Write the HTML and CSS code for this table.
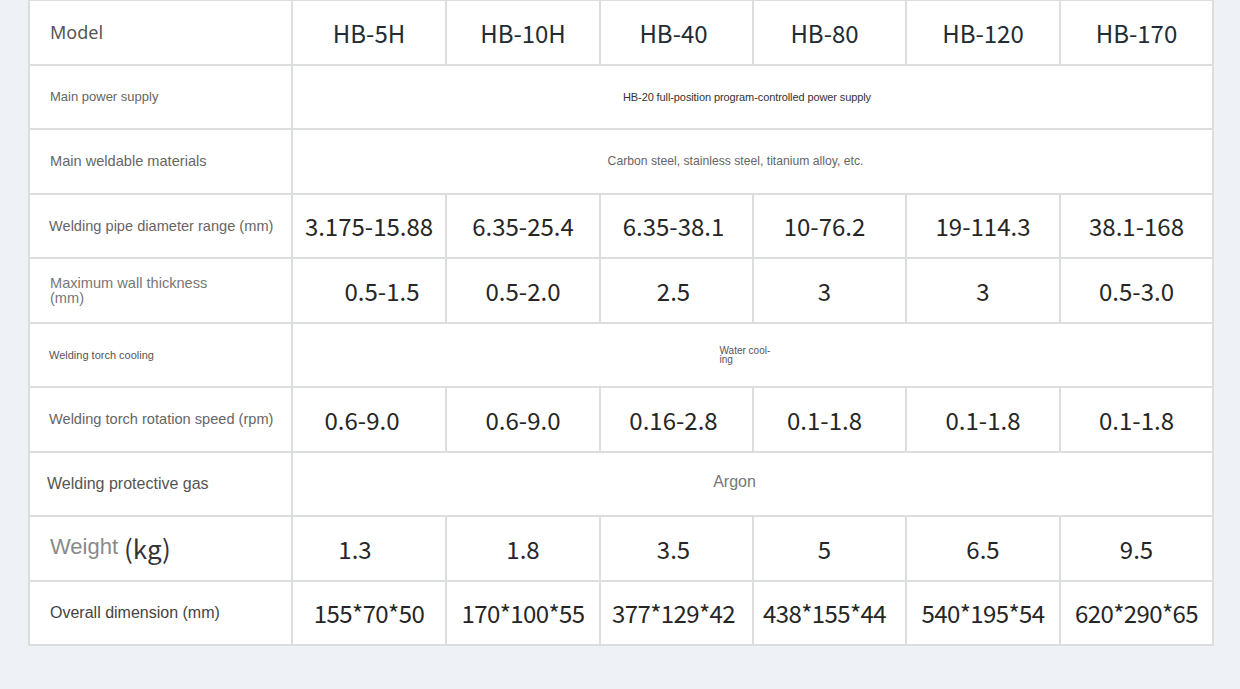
FILE: index.html
```html
<!DOCTYPE html>
<html lang="en">
<head>
<meta charset="utf-8">
<title>Specifications</title>
<link rel="stylesheet" href="styles.css">
</head>
<body>
<div class="page">
  <div class="spec">
    <div class="cell label model">Model</div>
    <div class="cell head">HB-5H</div>
    <div class="cell head">HB-10H</div>
    <div class="cell head nudge-s">HB-40</div>
    <div class="cell head nudge-m">HB-80</div>
    <div class="cell head">HB-120</div>
    <div class="cell head">HB-170</div>

    <div class="cell label tiny">Main power supply</div>
    <div class="cell span note-dark">HB-20 full-position program-controlled power supply</div>

    <div class="cell label small">Main weldable materials</div>
    <div class="cell span note-gray">Carbon steel, stainless steel, titanium alloy, etc.</div>

    <div class="cell label mid">Welding pipe diameter range (mm)</div>
    <div class="cell val">3.175-15.88</div>
    <div class="cell val">6.35-25.4</div>
    <div class="cell val nudge-s">6.35-38.1</div>
    <div class="cell val nudge-m">10-76.2</div>
    <div class="cell val">19-114.3</div>
    <div class="cell val">38.1-168</div>

    <div class="cell label wrap">Maximum wall thickness<br>(mm)</div>
    <div class="cell val shift-r">0.5-1.5</div>
    <div class="cell val">0.5-2.0</div>
    <div class="cell val nudge-s">2.5</div>
    <div class="cell val nudge-m">3</div>
    <div class="cell val">3</div>
    <div class="cell val">0.5-3.0</div>

    <div class="cell label micro">Welding torch cooling</div>
    <div class="cell span"><span class="water">Water cool-<br>ing</span></div>

    <div class="cell label mid">Welding torch rotation speed (rpm)</div>
    <div class="cell val shift-s">0.6-9.0</div>
    <div class="cell val">0.6-9.0</div>
    <div class="cell val nudge-s">0.16-2.8</div>
    <div class="cell val nudge-m">0.1-1.8</div>
    <div class="cell val">0.1-1.8</div>
    <div class="cell val">0.1-1.8</div>

    <div class="cell label big gas">Welding protective gas</div>
    <div class="cell span argon">Argon</div>

    <div class="cell label weight"><span class="w-word">Weight</span><span class="w-unit">(kg)</span></div>
    <div class="cell val shift-l">1.3</div>
    <div class="cell val">1.8</div>
    <div class="cell val nudge-s">3.5</div>
    <div class="cell val nudge-m">5</div>
    <div class="cell val">6.5</div>
    <div class="cell val">9.5</div>

    <div class="cell label big dark">Overall dimension (mm)</div>
    <div class="cell val dim">155*70*50</div>
    <div class="cell val dim">170*100*55</div>
    <div class="cell val dim nudge-s">377*129*42</div>
    <div class="cell val dim nudge-m">438*155*44</div>
    <div class="cell val dim">540*195*54</div>
    <div class="cell val dim">620*290*65</div>
  </div>
</div>
</body>
</html>
```

FILE: styles.css
```css
html, body {
  margin: 0;
  padding: 0;
  background: #eef1f5;
}

.page {
  width: 1240px;
  height: 689px;
  padding-left: 28px;
  box-sizing: border-box;
}

.spec {
  display: grid;
  grid-template-columns: 263px 154px 154px 153px 153px 154px 153px;
  grid-auto-rows: 64.5px;
  width: max-content;
  background: #ffffff;
  border-left: 2px solid #dcdddf;
  border-top: 1px solid #dcdddf;
}

.cell {
  box-sizing: border-box;
  border-right: 2px solid #dcdddf;
  border-bottom: 2px solid #dcdddf;
  display: flex;
  align-items: center;
  justify-content: center;
}

.label {
  justify-content: flex-start;
  padding-left: 20px;
  font-family: "Liberation Sans", Arial, sans-serif;
  color: #666;
}

.model {
  font-family: "Noto Sans", sans-serif;
  font-size: 18px;
  color: #555;
}

.tiny { font-size: 13px; color: #666; }
.small { font-size: 14.6px; color: #666; }
.mid { font-size: 14.6px; color: #666; padding-left: 19px; }
.micro { font-size: 11px; color: #555; padding-left: 19px; }
.big { font-size: 16px; color: #555; }
.gas { padding-left: 17px; }
.dark { color: #444; }

.wrap {
  font-size: 14.6px;
  line-height: 15px;
  color: #777;
  padding-top: 1px;
}

.weight {
  padding-bottom: 2px;
}
.w-word {
  font-size: 22px;
  color: #8a8a8a;
}
.w-unit {
  font-family: "Noto Sans CJK SC", "Noto Sans", sans-serif;
  font-size: 26px;
  color: #333;
  margin-left: 6px;
}

.head {
  font-family: "Noto Sans CJK SC", "Noto Sans", sans-serif;
  font-size: 24px;
  color: #222c34;
}

.val {
  font-family: "Noto Sans CJK SC", "Noto Sans", sans-serif;
  font-size: 24px;
  color: #262626;
}

.dim { letter-spacing: -0.6px; }

.shift-r { padding-left: 26px; }
.shift-l { padding-right: 28px; }
.shift-s { padding-right: 14px; }
.nudge-s { padding-right: 6px; }
.nudge-m { padding-right: 10px; }

.span {
  grid-column: span 6;
  font-family: "Liberation Sans", Arial, sans-serif;
}

.note-dark {
  font-size: 11px;
  color: #333;
  letter-spacing: -0.1px;
  padding-right: 11px;
}

.note-gray {
  font-size: 12.2px;
  color: #666;
  padding-right: 34px;
}

.water {
  font-size: 10px;
  line-height: 9px;
  color: #555;
  width: 56px;
  margin-left: -10px;
}

.argon {
  font-size: 16px;
  color: #777;
  padding-right: 36px;
  padding-bottom: 4px;
}
```
